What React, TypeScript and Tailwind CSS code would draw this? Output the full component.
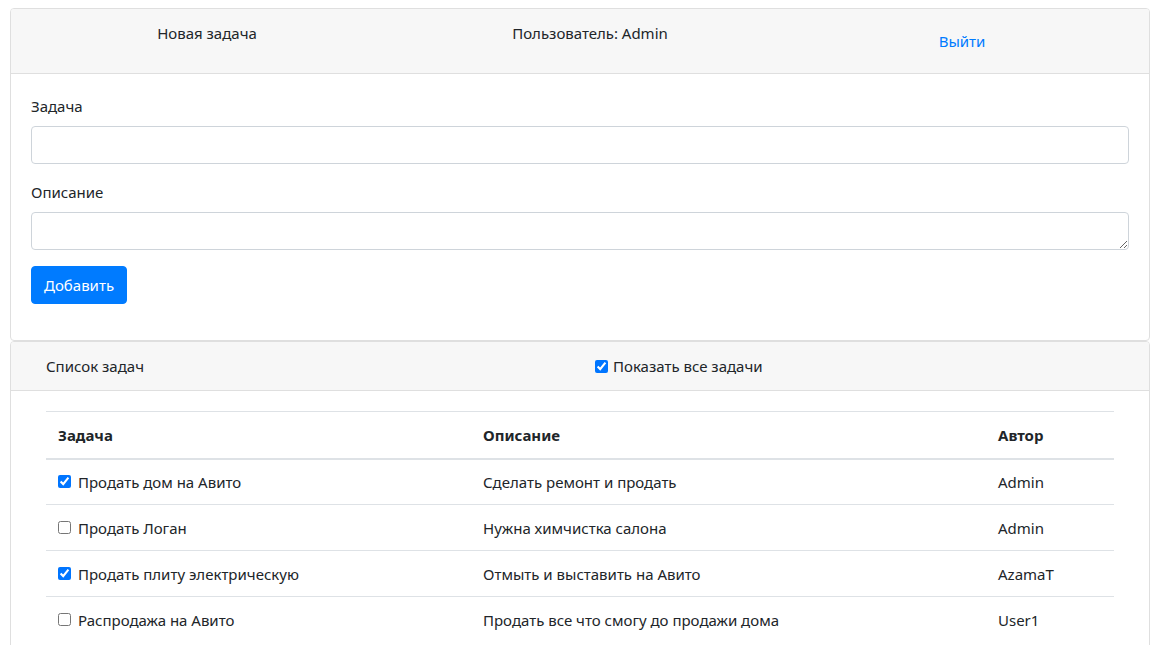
import React from "react";

const rows = [
  { done: true, title: "Продать дом на Авито", desc: "Сделать ремонт и продать", author: "Admin" },
  { done: false, title: "Продать Логан", desc: "Нужна химчистка салона", author: "Admin" },
  { done: true, title: "Продать плиту электрическую", desc: "Отмыть и выставить на Авито", author: "AzamaT" },
  { done: false, title: "Распродажа на Авито", desc: "Продать все что смогу до продажи дома", author: "User1" },
];

export default function App() {
  return (
    <div
      className="min-h-[645px] bg-white text-[#212529] text-[15px] leading-[24px] pl-[10px] pr-[11px] pt-[8px]"
      style={{ fontFamily: '"Noto Sans", "Open Sans", sans-serif' }}
    >
      {/* Card 1 */}
      <div className="border border-[#dfdfdf] rounded-[4px] overflow-hidden">
        <div className="bg-[#f7f7f7] border-b border-[#dfdfdf] h-[65px] px-[20px] pt-[12px]">
          <div className="grid grid-cols-3 -mx-[15px]">
            <div className="pl-[21px] pr-[15px] text-center">Новая задача</div>
            <div className="pl-[35px] pr-[15px] text-center">Пользователь: Admin</div>
            <div className="pl-[27px] pr-[15px] text-center">
              <button className="text-[#007bff] px-[12px] pt-[8px] leading-[24px]">Выйти</button>
            </div>
          </div>
        </div>
        <div className="p-[20px] pb-[36px]">
          <label className="block mb-[8px]">Задача</label>
          <input className="block w-full h-[38px] border border-[#ced4da] rounded-[4px] px-[12px] outline-none" />
          <label className="block mt-[16px] mb-[8px]">Описание</label>
          <textarea className="block w-full h-[38px] border border-[#ced4da] rounded-[4px] px-[12px] outline-none" rows={1} />
          <button className="mt-[16px] h-[38px] px-[12px] bg-[#007bff] text-white rounded-[4px] border border-[#007bff]">
            Добавить
          </button>
        </div>
      </div>

      {/* Card 2 */}
      <div className="border border-[#dfdfdf] rounded-[4px] overflow-hidden">
        <div className="bg-[#f7f7f7] border-b border-[#dfdfdf] h-[49px] px-[20px] pt-[12px]">
          <div className="grid grid-cols-2 -mx-[15px]">
            <div className="pl-[30px] pr-[15px]">Список задач</div>
            <div className="px-[15px] flex items-center gap-[5px]">
              <input type="checkbox" checked readOnly className="w-[13px] h-[13px] m-0" />
              <span>Показать все задачи</span>
            </div>
          </div>
        </div>
        <div className="pt-[20px] pb-[20px] px-[35px]">
          <table className="w-full border-collapse">
            <thead>
              <tr className="border-t border-[#dee2e6] border-b-2">
                <th className="w-[425px] text-left font-bold px-[12px] h-[47px] align-middle">Задача</th>
                <th className="w-[515px] text-left font-bold px-[12px] align-middle">Описание</th>
                <th className="text-left font-bold px-[12px] align-middle">Автор</th>
              </tr>
            </thead>
            <tbody>
              {rows.map((r, i) => (
                <tr key={i} className={i === 0 ? "" : "border-t border-[#dee2e6]"}>
                  <td className="px-[12px] h-[46px] align-middle">
                    <div className="flex items-center gap-[7px]">
                      <input type="checkbox" checked={r.done} readOnly className="w-[13px] h-[13px] m-0" />
                      <span>{r.title}</span>
                    </div>
                  </td>
                  <td className="px-[12px] align-middle">{r.desc}</td>
                  <td className="px-[12px] align-middle">{r.author}</td>
                </tr>
              ))}
            </tbody>
          </table>
        </div>
      </div>
    </div>
  );
}
